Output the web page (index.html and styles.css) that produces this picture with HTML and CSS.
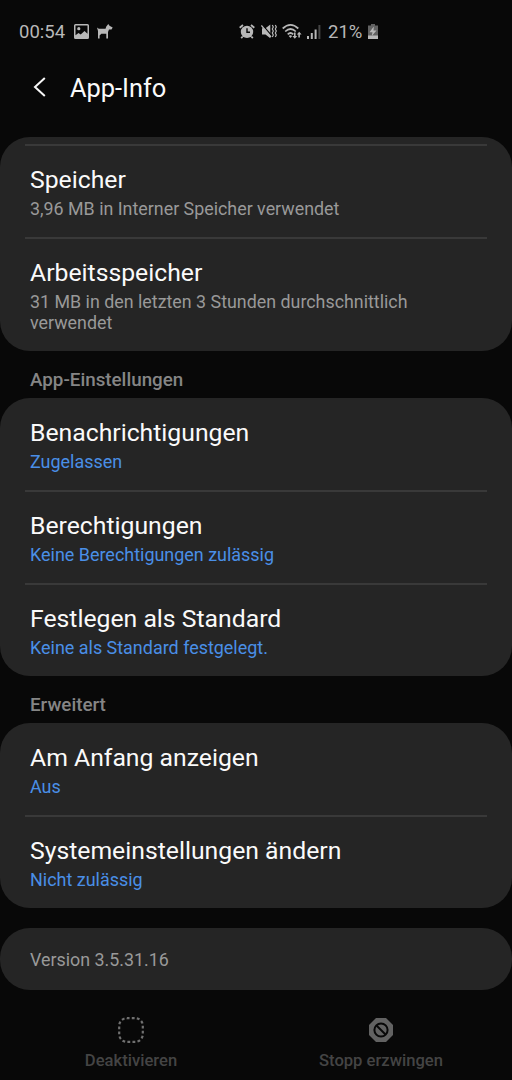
FILE: index.html
```html
<!DOCTYPE html>
<html lang="de">
<head>
<meta charset="utf-8">
<title>App-Info</title>
<link rel="stylesheet" href="styles.css">
</head>
<body>
<div class="screen">
  <div class="status">
    <span class="clock">00:54</span>
    <svg class="picture" width="15" height="15" viewBox="0 0 15 15"><path fill="currentColor" fill-rule="evenodd" d="M1.5 0h12A1.5 1.5 0 0 1 15 1.500v12a1.500 1.500 0 0 1-1.500 1.500h-12A1.500 1.500 0 0 1 0 13.500v-12A1.500 1.500 0 0 1 1.500 0zM1.500 1.500v9.700l3-2.200 2.200 1.500 3.800-3.500 3 2.700V1.500z"/><circle cx="4.800" cy="4.700" r="1.600" fill="currentColor"/></svg>
    <svg class="dog" width="16" height="15" viewBox="0 0 16 15"><path fill="currentColor" d="M0 3.500l1.800 1.300H8.500L9.300 2.500 11.300 0l1.200 1.800L15.700 3.600 14.500 5.500H12L11 8V14.500H9.300V9.800H4.300L2.600 11.500V14.500H1V7z"/></svg>
    <svg class="alarm" width="16" height="15" viewBox="0 0 16 15"><g fill="none" stroke="currentColor" stroke-width="1.800"><path d="M.7 3.800L4 1M12 1l3.300 2.800M3.700 12.500L2.200 14.200M12.300 12.500l1.500 1.700"/></g><circle cx="8" cy="7.900" r="6.200" fill="currentColor"/><path d="M8 4.300V8.300H11" fill="none" stroke="#080808" stroke-width="1.400"/></svg>
    <svg class="mute" width="16" height="15" viewBox="0 0 16 15"><path fill="currentColor" d="M1 4.300H4.500L9.300 .5V14.300L4.500 10.500H1z"/><path d="M1.300 .8L11 12" stroke="#080808" stroke-width="1.200"/><path d="M.4 1.500L10 13" stroke="currentColor" stroke-width="1.300"/><path d="M11.300 1l1 2-1 2 1 2-1 2 1 2-1 2M14.300 1l1 2-1 2 1 2-1 2 1 2-1 2" fill="none" stroke="currentColor" stroke-width="1.200"/></svg>
    <svg class="wifi" width="20" height="16" viewBox="0 0 20 16"><g fill="none" stroke="currentColor" stroke-width="1.700"><path d="M.7 4.500Q8.500-2.600 16.300 4.500M3.200 7.500Q8.500 2.500 13.800 7.500M5.700 10.300Q8.500 7.700 11.300 10.300"/></g><path fill="currentColor" d="M6.700 12Q8.500 10.500 10.200 12L8.500 14zM12 8.500h1.600V12h1.600l-2.400 2.700L10.400 12H12zM16.300 13.500V10.500H14.800L17.200 7.800l2.400 2.700H17.900v3z"/></svg>
    <svg class="signal" width="14" height="14" viewBox="0 0 14 14" fill="currentColor"><path d="M0 11h2v3H0zM3.800 8h2v6h-2zM7.600 4.500h2V14h-2z"/><path opacity=".35" d="M11.400 0h2v14h-2z"/></svg>
    <span class="percent">21%</span>
    <svg class="battery" width="10" height="15" viewBox="0 0 10 15"><path fill="#626262" d="M3 0h4v1.500h3V12H0V1.500h3z"/><path fill="currentColor" d="M0 11.500h10V15H0zM5.800 2.500L1.500 8.200H4.500L3.700 12 8.500 6.500H5.500z"/></svg>
  </div>
  <header class="toolbar">
    <svg class="back" width="14" height="20" viewBox="0 0 14 20"><path d="M11.800 1L2 10l9.800 9" fill="none" stroke="#f7f7f7" stroke-width="2"/></svg>
    <h1 class="heading">App-Info</h1>
  </header>
  <main>
    <section class="card storage">
      <div class="row"><div class="title">Speicher</div><div class="sub">3,96 MB in Interner Speicher verwendet</div></div>
      <div class="row"><div class="title">Arbeitsspeicher</div><div class="sub">31 MB in den letzten 3 Stunden durchschnittlich verwendet</div></div>
    </section>
    <h2 class="label">App-Einstellungen</h2>
    <section class="card">
      <div class="row"><div class="title">Benachrichtigungen</div><div class="sub link">Zugelassen</div></div>
      <div class="row"><div class="title">Berechtigungen</div><div class="sub link">Keine Berechtigungen zulässig</div></div>
      <div class="row"><div class="title">Festlegen als Standard</div><div class="sub link">Keine als Standard festgelegt.</div></div>
    </section>
    <h2 class="label">Erweitert</h2>
    <section class="card">
      <div class="row"><div class="title">Am Anfang anzeigen</div><div class="sub link">Aus</div></div>
      <div class="row"><div class="title">Systemeinstellungen ändern</div><div class="sub link">Nicht zulässig</div></div>
    </section>
    <section class="card version"><div class="sub">Version 3.5.31.16</div></section>
  </main>
  <footer class="actions">
    <div class="action">
      <svg width="28" height="28" viewBox="0 0 28 28"><rect x="2.200" y="2.200" width="23.600" height="23.600" rx="7.500" fill="none" stroke="#707070" stroke-width="2.200" pathLength="80" stroke-dasharray="2.800 2.200"/></svg>
      <span>Deaktivieren</span>
    </div>
    <div class="action">
      <svg width="28" height="28" viewBox="0 0 28 28"><path fill="#626262" d="M9 2h10l7 7v10l-7 7H9l-7-7V9z"/><circle cx="14" cy="14" r="6.600" fill="none" stroke="#080808" stroke-width="2"/><path d="M9.500 9.500l9 9" stroke="#080808" stroke-width="2"/></svg>
      <span>Stopp erzwingen</span>
    </div>
  </footer>
</div>
</body>
</html>
```
FILE: styles.css
```css
* { box-sizing: border-box; }
body { margin: 0; background: #080808; font-family: Roboto, sans-serif; }
.screen { width: 512px; height: 1080px; overflow: hidden; display: flex; flex-direction: column; }
.status { height: 60px; padding: 3px 0 0 19px; display: flex; align-items: center; color: #b8b8b8; font-size: 18.5px; }
.status svg { flex: none; }
.clock { width: 55px; }
.dog { margin-left: 8px; }
.alarm { margin-left: 126px; }
.mute { margin-left: 6px; }
.wifi { margin-left: 5px; }
.signal { margin-left: 5px; }
.percent { width: 40px; margin-left: 7px; }
.toolbar { height: 77px; padding: 4px 0 0 33px; display: flex; align-items: flex-start; }
.back { margin-top: 13px; }
.heading { margin: 9px 0 0 23px; font-size: 25.4px; line-height: 30px; font-weight: 400; color: #fafafa; }
.card { background: #252525; border-radius: 30px; }
.row { height: 92px; padding: 20px 60px 0 30px; }
.row + .row, .storage .row { height: 93px; padding-top: 21px; background: linear-gradient(#393939, #393939) 25px 0 / 462px 2px no-repeat; }
.storage { height: 214px; padding-top: 7px; }
.title { font-size: 24.75px; line-height: 30px; color: #fafafa; white-space: nowrap; }
.sub { font-size: 17.85px; line-height: 21px; margin-top: 3px; color: #999; }
.link { color: #4a8fe7; font-size: 17.95px; }
.label { height: 47px; margin: 0; padding: 19px 0 0 30px; font-size: 18.8px; line-height: 21px; font-weight: 500; color: #858585; }
.version { height: 62px; margin-top: 20px; padding: 18px 30px; }
.actions { display: flex; padding: 26px 6px 0; }
.action { flex: 1; display: flex; flex-direction: column; align-items: center; font-size: 16.6px; line-height: 21px; font-weight: 500; color: #444; }
.action span { margin-top: 6px; }
```
